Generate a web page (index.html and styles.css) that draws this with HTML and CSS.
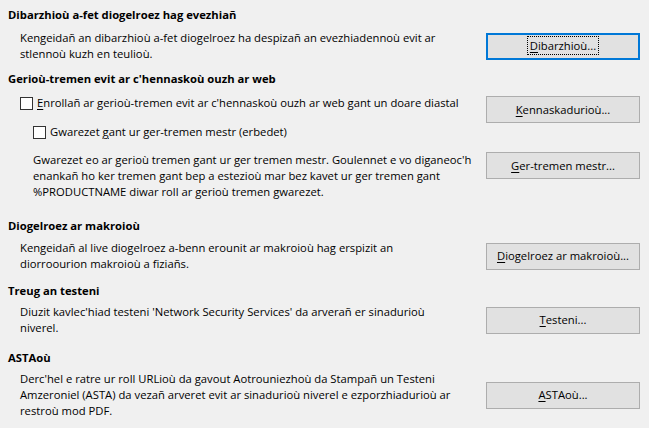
FILE: index.html
```html
<!DOCTYPE html>
<html lang="br">
<head>
<meta charset="utf-8">
<title>Diogelroez</title>
<link rel="stylesheet" href="styles.css">
</head>
<body>
<div class="page">
  <section class="sec sec-1">
    <h2 class="head">Dibarzhioù a-fet diogelroez hag evezhiañ</h2>
    <div class="row row-center row-1">
      <p class="desc">Kengeidañ an dibarzhioù a-fet diogelroez ha despizañ an evezhiadennoù evit ar<br>stlennoù kuzh en teulioù.</p>
      <button class="btn btn-focus" type="button"><span class="focus-ring"><u>D</u>ibarzhioù...</span></button>
    </div>
  </section>

  <section class="sec sec-2">
    <h2 class="head">Gerioù-tremen evit ar c'hennaskoù ouzh ar web</h2>
    <div class="row row-top row-2a">
      <div class="checks">
        <label class="check check-1"><span class="box"></span><span><u>E</u>nrollañ ar gerioù-tremen evit ar c'hennaskoù ouzh ar web gant un doare diastal</span></label>
        <label class="check check-2"><span class="box"></span><span>Gwarezet <u>g</u>ant ur ger-tremen mestr (erbedet)</span></label>
      </div>
      <button class="btn btn-2" type="button"><u>K</u>ennaskadurioù...</button>
    </div>
    <div class="row row-top row-2b">
      <p class="desc desc-sub">Gwarezet eo ar gerioù tremen gant ur ger tremen mestr. Goulennet e vo diganeoc'h<br>enankañ ho ker tremen gant bep a estezioù mar bez kavet ur ger tremen gant<br>%PRODUCTNAME diwar roll ar gerioù tremen gwarezet.</p>
      <button class="btn" type="button"><u>G</u>er-tremen mestr...</button>
    </div>
  </section>

  <section class="sec sec-3">
    <h2 class="head">Diogelroez ar makroioù</h2>
    <div class="row row-center row-3">
      <p class="desc">Kengeidañ al live diogelroez a-benn erounit ar makroioù hag erspizit an<br>diorroourion makroioù a fiziañs.</p>
      <button class="btn" type="button"><u>D</u>iogelroez ar makroioù...</button>
    </div>
  </section>

  <section class="sec sec-4">
    <h2 class="head">Treug an testeni</h2>
    <div class="row row-center row-4">
      <p class="desc">Diuzit kavlec'hiad testeni 'Network Security Services' da arverañ er sinadurioù<br>niverel.</p>
      <button class="btn" type="button"><u>T</u>esteni...</button>
    </div>
  </section>

  <section class="sec sec-5">
    <h2 class="head">ASTAoù</h2>
    <div class="row row-center row-5">
      <p class="desc">Derc'hel e ratre ur roll URLioù da gavout Aotrouniezhoù da Stampañ un Testeni<br>Amzeroniel (ASTA) da vezañ arveret evit ar sinadurioù niverel e ezporzhiadurioù ar<br>restroù mod PDF.</p>
      <button class="btn" type="button"><u>A</u>STAoù...</button>
    </div>
  </section>
</div>
</body>
</html>
```

FILE: styles.css
```css
html, body {
  margin: 0;
  padding: 0;
  background: #f0f0f0;
}

body {
  width: 649px;
  height: 428px;
  overflow: hidden;
  font-family: "Open Sans", "Noto Sans", "Liberation Sans", sans-serif;
  font-size: 11.25px;
  line-height: 16px;
  color: #000;
}

.page {
  padding: 7px 9px 0 8px;
}

.sec {
  margin: 0;
}

.head {
  margin: 0;
  font-size: 11.25px;
  line-height: 16px;
  font-weight: 700;
  white-space: nowrap;
}

.sec-2 { margin-top: 9px; }
.sec-3 { margin-top: 18px; }
.sec-4 { margin-top: 11px; }
.sec-5 { margin-top: 14px; }

.row {
  display: grid;
  grid-template-columns: 1fr 154px;
}

.row-center { align-items: center; }
.row-top { align-items: start; }

.row-1 { margin-top: 7px; }
.row-2a { margin-top: 8px; }
.row-2b { margin-top: 12px; }
.row-3 { margin-top: 6px; }
.row-4 { margin-top: 5px; }
.row-5 { margin-top: 5px; }

.desc {
  margin: 0;
  padding-left: 12px;
  white-space: nowrap;
}

.desc-sub {
  padding-left: 25px;
}

.checks {
  display: flex;
  flex-direction: column;
  gap: 13px;
}

.check {
  display: flex;
  align-items: center;
  gap: 4px;
  white-space: nowrap;
  padding-left: 12px;
}

.check-2 {
  padding-left: 25px;
}

.box {
  width: 11px;
  height: 11px;
  border: 1px solid #333;
  background: #fff;
  flex: none;
}

.btn {
  box-sizing: border-box;
  height: 27px;
  width: 154px;
  margin: 0;
  padding: 0;
  background: #e1e1e1;
  border: 1px solid #adadad;
  border-radius: 0;
  font-family: inherit;
  font-size: 11.25px;
  line-height: 16px;
  color: #000;
  text-align: center;
}

.btn-2 {
  margin-top: 1px;
}

.btn-focus {
  border: 2px solid #0078d7;
}

.focus-ring {
  outline: 1px dotted #000;
  outline-offset: 1px;
  padding: 0 1px;
}

u {
  text-decoration: underline;
  text-underline-offset: 2px;
}
```
